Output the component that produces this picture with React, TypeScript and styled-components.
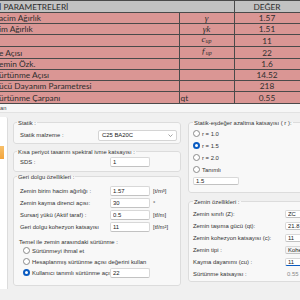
import styled, { createGlobalStyle } from 'styled-components';

const GlobalStyle = createGlobalStyle`
  html, body {
    margin: 0;
    padding: 0;
    background: #f0f0f0;
  }
`;

const Screen = styled.div`
  width: 300px;
  height: 300px;
  overflow: hidden;
  background: #f0f0f0;
  display: flex;
  flex-direction: column;
  font-family: 'Liberation Sans', Arial, sans-serif;
  color: #333;
`;

/* ---------- parameter sheet ---------- */

const Sheet = styled.table`
  flex: none;
  width: 300px;
  table-layout: fixed;
  border-collapse: collapse;
  font-family: Lato, 'Liberation Sans', sans-serif;
  font-size: 8.3px;
  color: #2e2e2e;
`;

const Col = styled.col<{ $w: number }>`
  width: ${(p) => p.$w}px;
`;

const Row = styled.tr<{ $head?: boolean }>`
  height: ${(p) => (p.$head ? 11.5 : 11.2)}px;
  background: ${(p) => (p.$head ? '#c2c2c2' : '#da9694')};
`;

const Cell = styled.td<{ $align?: 'left' | 'center' }>`
  padding: 0 1px;
  border: 1px solid #4a4a4a;
  border-left: ${(p) => (p.$align === 'left' ? 'none' : '1px solid #4a4a4a')};
  text-align: ${(p) => p.$align ?? 'center'};
  white-space: nowrap;
  overflow: hidden;
  line-height: 9px;
  vertical-align: bottom;
`;

const Label = styled.span`
  display: block;
  margin-left: -2px;
`;

const Sym = styled.span`
  font-family: 'Liberation Serif', serif;
  font-style: italic;
  font-size: 9px;
`;

const Sub = styled.sub`
  font-size: 6px;
  vertical-align: -1px;
`;

/* ---------- form area ---------- */

const Strip = styled.div`
  flex: none;
  height: 8px;
  line-height: 8px;
  font-size: 5.8px;
  background: #f6f6f6;
  border-bottom: 1px solid #e2e2e2;
  color: #444;
`;

const Body = styled.div`
  flex: 1;
  display: flex;
  align-items: flex-start;
  min-height: 0;
`;

const Sidebar = styled.div`
  flex: none;
  width: 7px;
  height: 172px;
  margin-top: 4px;
  background: #fff;
  border-right: 1px solid #dcdcdc;
  border-top-right-radius: 2px;
`;

const SideTab = styled.div`
  width: 4px;
  height: 13px;
  margin-top: 29px;
  background: linear-gradient(#f8c06a, #f2a43c);
`;

const Columns = styled.div`
  display: flex;
  gap: 7px;
  padding-left: 5px;
  align-items: flex-start;
`;

const Column = styled.div<{ $w: number; $top: number }>`
  flex: none;
  width: ${(p) => p.$w}px;
  padding-top: ${(p) => p.$top}px;
  display: flex;
  flex-direction: column;
`;

const Group = styled.fieldset<{ $gap?: number; $pad: string }>`
  box-sizing: border-box;
  width: 100%;
  min-width: 0;
  margin: ${(p) => p.$gap ?? 0}px 0 0;
  padding: ${(p) => p.$pad};
  border: 1px solid #dcdcdc;
  border-radius: 3px;
  background: #f8f8f8;
`;

const Legend = styled.legend<{ $shift?: number }>`
  padding: 0 1px;
  margin-left: ${(p) => p.$shift ?? -3}px;
  font-size: 5.9px;
  line-height: 6px;
  color: #333;
`;

const Field = styled.div<{ $label: number; $input: number; $h?: number }>`
  display: grid;
  grid-template-columns: ${(p) => p.$label}px ${(p) => p.$input}px auto;
  column-gap: 3px;
  align-items: center;
  height: ${(p) => p.$h ?? 10}px;
  font-size: 5.9px;
  white-space: nowrap;
`;

const Stack = styled.div<{ $gap: number }>`
  display: flex;
  flex-direction: column;
  gap: ${(p) => p.$gap}px;
`;

const Input = styled.input<{ $h?: number; $focus?: boolean; $muted?: boolean }>`
  box-sizing: border-box;
  width: 100%;
  height: ${(p) => p.$h ?? 10}px;
  margin: 0;
  padding: 0 2px;
  border: 1px solid #d8d8d8;
  border-bottom-color: ${(p) => (p.$focus ? '#0a5cc2' : '#c2c2c2')};
  border-radius: 2px;
  background: ${(p) => (p.$muted ? '#f4f4f4' : '#fff')};
  font-family: 'Liberation Sans', Arial, sans-serif;
  font-size: 5.9px;
  color: #222;
  outline: none;
`;

const Select = styled.div`
  box-sizing: border-box;
  height: 11px;
  display: flex;
  align-items: center;
  justify-content: space-between;
  padding: 0 3px;
  background: #fff;
  border: 1px solid #d4d4d4;
  border-radius: 2px;
  font-size: 5.9px;
  color: #222;
`;

const Unit = styled.span`
  font-size: 5.9px;
  color: #333;
`;

const Note = styled.div<{ $top: number }>`
  margin-top: ${(p) => p.$top}px;
  height: 8px;
  line-height: 8px;
  font-size: 5.9px;
  margin-left: -1px;
`;

const Option = styled.div<{ $indent: number; $h: number }>`
  display: flex;
  align-items: center;
  gap: 2px;
  height: ${(p) => p.$h}px;
  margin-left: ${(p) => p.$indent}px;
  font-size: 5.9px;
  white-space: nowrap;
`;

const Dot = styled.span<{ $on?: boolean }>`
  box-sizing: border-box;
  flex: none;
  width: 7px;
  height: 7px;
  border-radius: 50%;
  border: ${(p) => (p.$on ? '2px solid #0a5cc2' : '1px solid #8a8a8a')};
  background: #fff;
`;

const Plain = styled.span`
  color: #888;
  padding-left: 2px;
`;

const Chevron = () => (
  <svg width="5" height="3" viewBox="0 0 5 3">
    <path d="M0.5 0.5 L2.5 2.5 L4.5 0.5" fill="none" stroke="#666" strokeWidth="0.6" />
  </svg>
);

const rows = [
  { label: 'acim Ağırlık', sym: <Sym>γ</Sym>, value: '1.57' },
  { label: 'im Ağırlık', sym: <Sym>γk</Sym>, value: '1.51' },
  { label: '', sym: <Sym>c<Sub>up</Sub></Sym>, value: '11' },
  { label: 'e Açısı', sym: <Sym>ƒ<Sub>up</Sub></Sym>, value: '22' },
  { label: 'emin Özk.', sym: null, value: '1.6' },
  { label: 'ürtünme Açısı', sym: null, value: '14.52' },
  { label: 'ücü Dayanım Parametresi', sym: null, value: '218' },
  { label: 'ürtünme Çarpanı', sym: 'qt', value: '0.55' },
];

export default function App() {
  return (
    <>
      <GlobalStyle />
      <Screen>
        <Sheet>
          <colgroup>
            <Col $w={179} />
            <Col $w={55} />
            <Col $w={66} />
          </colgroup>
          <tbody>
            <Row $head>
              <Cell $align="left" colSpan={2}>
                <Label>İ PARAMETRELERİ</Label>
              </Cell>
              <Cell>DEĞER</Cell>
            </Row>
            {rows.map((r, i) => (
              <Row key={i}>
                <Cell $align="left">
                  <Label>{r.label}</Label>
                </Cell>
                <Cell $align={r.sym === 'qt' ? 'left' : 'center'}>{r.sym}</Cell>
                <Cell>{r.value}</Cell>
              </Row>
            ))}
          </tbody>
        </Sheet>

        <Strip>an</Strip>

        <Body>
          <Sidebar>
            <SideTab />
          </Sidebar>

          <Columns>
            <Column $w={168} $top={7}>
              <Group $pad="4px 3px 2px 6px">
                <Legend>Statik :</Legend>
                <Field $label={75} $input={79} $h={11}>
                  <span>Statik malzeme :</span>
                  <Select>
                    C25 BA20C
                    <Chevron />
                  </Select>
                </Field>
              </Group>

              <Group $gap={5} $pad="2px 3px 4px 6px">
                <Legend>Kısa periyot tasarım spektral ivme katsayısı :</Legend>
                <Field $label={87} $input={40}>
                  <span>SDS :</span>
                  <Input readOnly defaultValue="1" />
                </Field>
              </Group>

              <Group $gap={2} $pad="6px 3px 7px 6px">
                <Legend>Geri dolgu özellikleri :</Legend>
                <Stack $gap={2}>
                  <Field $label={87} $input={40}>
                    <span>Zemin birim hacim ağırlığı :</span>
                    <Input readOnly defaultValue="1.57" />
                    <Unit>[t/m³]</Unit>
                  </Field>
                  <Field $label={87} $input={40}>
                    <span>Zemin kayma direnci açısı:</span>
                    <Input readOnly defaultValue="30" />
                    <Unit>°</Unit>
                  </Field>
                  <Field $label={87} $input={40}>
                    <span>Sursarj yükü (Aktif taraf) :</span>
                    <Input readOnly defaultValue="0.5" />
                    <Unit>[tf/m]</Unit>
                  </Field>
                  <Field $label={87} $input={40}>
                    <span>Geri dolgu kohezyon katsayısı</span>
                    <Input readOnly defaultValue="11" />
                    <Unit>[tf/m²]</Unit>
                  </Field>
                </Stack>
                <Note $top={6}>Temel ile zemin arasındaki sürtünme :</Note>
                <Stack $gap={1}>
                  <Option $indent={3} $h={10}>
                    <Dot />
                    Sürtünmeyi ihmal et
                  </Option>
                  <Option $indent={3} $h={10}>
                    <Dot />
                    Hesaplanmış sürtünme açısı değerini kullan
                  </Option>
                  <Field $label={87} $input={40}>
                    <Option $indent={3} $h={10}>
                      <Dot $on />
                      Kullanıcı tanımlı sürtünme açısı
                    </Option>
                    <Input readOnly defaultValue="22" />
                  </Field>
                </Stack>
              </Group>
            </Column>

            <Column $w={130} $top={7}>
              <Group $pad="2px 0 6px 4px">
                <Legend $shift={0}>Statik-eşdeğer azaltma katsayısı ( r ):</Legend>
                <Option $indent={0} $h={12}>
                  <Dot />
                  r = 1.0
                </Option>
                <Option $indent={0} $h={12}>
                  <Dot $on />
                  r = 1.5
                </Option>
                <Option $indent={0} $h={12}>
                  <Dot />
                  r = 2.0
                </Option>
                <Option $indent={0} $h={12}>
                  <Dot />
                  Tanımlı
                </Option>
                <Field $label={46} $input={0}>
                  <Input readOnly defaultValue="1.5" $h={8} />
                </Field>
              </Group>

              <Group $gap={6} $pad="3px 0 1px 4px">
                <Legend $shift={0}>Zemin özellikleri :</Legend>
                <Field $label={89} $input={45} $h={12}>
                  <span>Zemin sınıfı (Z):</span>
                  <Input readOnly defaultValue="ZC" $h={8} />
                </Field>
                <Field $label={89} $input={45} $h={12}>
                  <span>Zemin taşıma gücü (qt):</span>
                  <Input readOnly defaultValue="21.8" $h={8} />
                </Field>
                <Field $label={89} $input={45} $h={12}>
                  <span>Zemin kohezyon katsayısı (c):</span>
                  <Input readOnly defaultValue="11" $h={8} />
                </Field>
                <Field $label={89} $input={45} $h={12}>
                  <span>Zemin tipi :</span>
                  <Input readOnly defaultValue="Kohezyonlu" $h={8} $muted />
                </Field>
                <Field $label={89} $input={45} $h={12}>
                  <span>Kayma dayanımı (cu) :</span>
                  <Input readOnly defaultValue="11" $h={8} $focus />
                </Field>
                <Field $label={89} $input={45} $h={12}>
                  <span>Sürtünme katsayısı :</span>
                  <Plain>0.55</Plain>
                </Field>
              </Group>
            </Column>
          </Columns>
        </Body>
      </Screen>
    </>
  );
}
